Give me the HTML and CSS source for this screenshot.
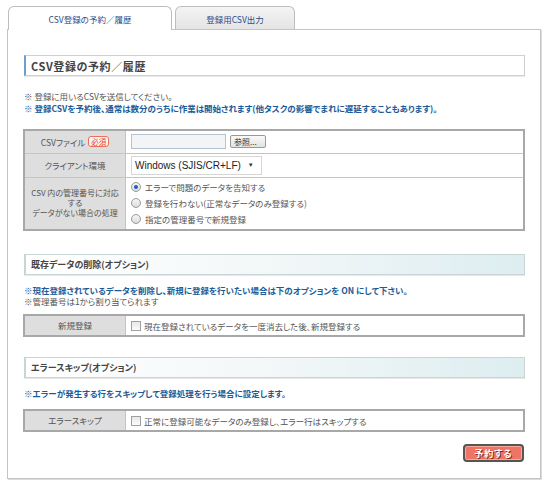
FILE: index.html
```html
<!DOCTYPE html>
<html lang="ja">
<head>
<meta charset="utf-8">
<title>CSV登録の予約／履歴</title>
<link rel="stylesheet" href="styles.css">
</head>
<body>
<div class="page">
  <div class="tabs">
    <div class="tab tab-active">CSV登録の予約／履歴</div>
    <div class="tab">登録用CSV出力</div>
  </div>
  <div class="panel">
    <h2 class="sec sec-plain">CSV登録の予約／履歴</h2>
    <p class="note note-first">※ 登録に用いるCSVを送信してください。</p>
    <p class="note note-blue">※ 登録CSVを予約後、通常は数分のうちに作業は開始されます(他タスクの影響でまれに遅延することもあります)。</p>

    <table class="form form-main">
      <tr class="row-file">
        <th>CSVファイル <span class="req">必須</span></th>
        <td><span class="file-box"></span><span class="browse">参照...</span></td>
      </tr>
      <tr class="row-env">
        <th>クライアント環境</th>
        <td><span class="select">Windows (SJIS/CR+LF)<span class="caret">▼</span></span></td>
      </tr>
      <tr class="row-opt">
        <th class="th-multi">CSV 内の管理番号に対応<br>する<br>データがない場合の処理</th>
        <td>
          <div class="radio-list">
            <label class="radio-item"><span class="radio radio-on"></span>エラーで問題のデータを告知する</label>
            <label class="radio-item"><span class="radio"></span>登録を行わない(正常なデータのみ登録する)</label>
            <label class="radio-item"><span class="radio"></span>指定の管理番号で新規登録</label>
          </div>
        </td>
      </tr>
    </table>

    <h2 class="sec sec-grad">既存データの削除(オプション)</h2>
    <p class="note note-blue note-tight">※現在登録されているデータを削除し、新規に登録を行いたい場合は下のオプションを ON にして下さい。</p>
    <p class="note note-tight2">※管理番号は1から割り当てられます</p>
    <table class="form form-small form-del">
      <tr>
        <th>新規登録</th>
        <td><label class="check-item"><span class="check"></span>現在登録されているデータを一度消去した後、新規登録する</label></td>
      </tr>
    </table>

    <h2 class="sec sec-grad sec-skip">エラースキップ(オプション)</h2>
    <p class="note note-blue note-tight">※エラーが発生する行をスキップして登録処理を行う場合に設定します。</p>
    <table class="form form-small form-skip">
      <tr>
        <th>エラースキップ</th>
        <td><label class="check-item"><span class="check"></span>正常に登録可能なデータのみ登録し、エラー行はスキップする</label></td>
      </tr>
    </table>

    <div class="actions">
      <span class="reserve">予約する</span>
    </div>
  </div>
</div>
</body>
</html>
```
FILE: styles.css
```css
html, body {
  margin: 0;
  padding: 0;
  background: #ffffff;
}
body {
  font-family: "Noto Sans CJK JP", "Noto Sans", sans-serif;
  font-size: 9px;
  color: #555;
  font-feature-settings: "palt";
}
.page {
  padding: 6px 9px 6px 7px;
}
.tabs {
  display: flex;
  gap: 3px;
  padding-left: 1px;
  height: 24px;
  position: relative;
  z-index: 1;
}
.tab {
  width: 120px;
  height: 23px;
  box-sizing: border-box;
  border: 1px solid #bdbdbd;
  border-bottom: none;
  border-radius: 6px 6px 0 0;
  background: linear-gradient(#f4f4f4, #e4e4e4);
  color: #2a4c8a;
  display: flex;
  align-items: center;
  justify-content: center;
  font-size: 8.5px;
  padding-top: 1px;
}
.tab-active {
  width: 164px;
  height: 24px;
  background: #ffffff;
}
.panel {
  margin-top: -1px;
  border: 1px solid #c4c4c4;
  box-shadow: 1px 1px 0 #dcdcdc;
  padding: 25px 15px 16px 16px;
}
.sec {
  margin: 0;
  height: 21px;
  box-sizing: border-box;
  border: 1px solid #cfcfcf;
  border-left: 2px solid #6a9fd0;
  padding-left: 5px;
  display: flex;
  align-items: center;
  font-size: 11px;
  font-weight: bold;
  color: #444;
  letter-spacing: 0.6px;
  box-shadow: 0 1px 0 #e8e8e8;
}
.sec-plain {
  background: #ffffff;
}
.sec-grad {
  font-size: 9px;
  letter-spacing: 0;
  margin-top: 23px;
  background: linear-gradient(90deg, #ffffff 0%, #f2f7f8 50%, #ddedf0 100%);
  border-color: #c8d4d6;
}
.sec-skip {
  margin-top: 20px;
}
.note {
  margin: 0;
  line-height: 12px;
  font-size: 8.5px;
  color: #555;
}
.note-first {
  margin-top: 14px;
}
.note-blue {
  color: #1b5c98;
  font-weight: bold;
}
.note-tight {
  margin-top: 10px;
  line-height: 11px;
}
.note-tight2 {
  line-height: 10px;
}
.form {
  width: 502px;
  border-collapse: collapse;
  border: 2px solid #a8a8a8;
  margin-left: -1px;
}
.form-main {
  margin-top: 15px;
}
.form th, .form td {
  border: 1px solid #c4c4c4;
  padding: 0;
  font-size: 8.5px;
  font-weight: normal;
  white-space: nowrap;
}
.form th {
  width: 100px;
  background: #dedede;
  color: #555;
  text-align: center;
  line-height: 11px;
}
.form th.th-multi {
  line-height: 10px;
  font-size: 8px;
  padding: 1px 0;
}
.form td {
  background: #fff;
  padding-left: 5px;
}
.row-file {
  height: 23px;
}
.row-env {
  height: 24px;
}
.row-opt {
  height: 53px;
}
.req {
  display: inline-block;
  border: 1px solid #e8705c;
  border-radius: 3px;
  color: #e0442c;
  background: #fff4f0;
  font-size: 7.5px;
  line-height: 9px;
  padding: 0 2px;
  margin-left: 1px;
  vertical-align: 1px;
}
.file-box {
  display: inline-block;
  width: 95px;
  height: 15px;
  box-sizing: border-box;
  border: 1px solid #b4c4d4;
  background: #f2f4f6;
  vertical-align: middle;
}
.browse {
  display: inline-block;
  margin-left: 4px;
  height: 13px;
  width: 36px;
  box-sizing: border-box;
  border: 1px solid #999;
  border-radius: 2px;
  background: linear-gradient(#fafafa, #e2e2e2);
  font-size: 8px;
  line-height: 11px;
  color: #333;
  padding-left: 3px;
  vertical-align: middle;
}
.select {
  display: inline-flex;
  align-items: center;
  height: 19px;
  box-sizing: border-box;
  border: 1px solid #d6d6d6;
  font-family: "Liberation Sans", Arial, sans-serif;
  font-size: 10px;
  color: #222;
  padding: 0 7px 0 3px;
  white-space: nowrap;
  vertical-align: middle;
}
.caret {
  font-size: 6px;
  margin-left: 7px;
  color: #333;
}
.radio-list {
  display: flex;
  flex-direction: column;
  gap: 4px;
  padding: 2px 0;
}
.radio-item, .check-item {
  display: flex;
  align-items: center;
  color: #555;
}
.radio {
  width: 8px;
  height: 8px;
  border: 1px solid #9a9a9a;
  border-radius: 50%;
  background: linear-gradient(#f6f6f6, #dcdcdc);
  margin-right: 4px;
  position: relative;
}
.radio-on::after {
  content: "";
  position: absolute;
  left: 2px;
  top: 2px;
  width: 4px;
  height: 4px;
  border-radius: 50%;
  background: #1f5ec4;
}
.form-small tr {
  height: 21px;
}
.form-del {
  margin-top: 8px;
}
.form-skip {
  margin-top: 10px;
}
.check {
  width: 8px;
  height: 8px;
  border: 1px solid #a0a0a0;
  background: linear-gradient(#e8e8e8, #fafafa);
  margin-right: 3px;
}
.actions {
  display: flex;
  justify-content: flex-end;
  margin-top: 12px;
  padding-right: 1px;
}
.reserve {
  display: inline-flex;
  align-items: center;
  justify-content: center;
  width: 61px;
  height: 18px;
  box-sizing: border-box;
  border: 2px solid #555;
  border-radius: 4px;
  background: #f07466;
  color: #fff;
  font-weight: bold;
  font-size: 9px;
  letter-spacing: 1px;
  text-shadow: 1px 1px 0 #7a2a20;
  box-shadow: inset 0 0 0 1px #f8a898;
}
```
